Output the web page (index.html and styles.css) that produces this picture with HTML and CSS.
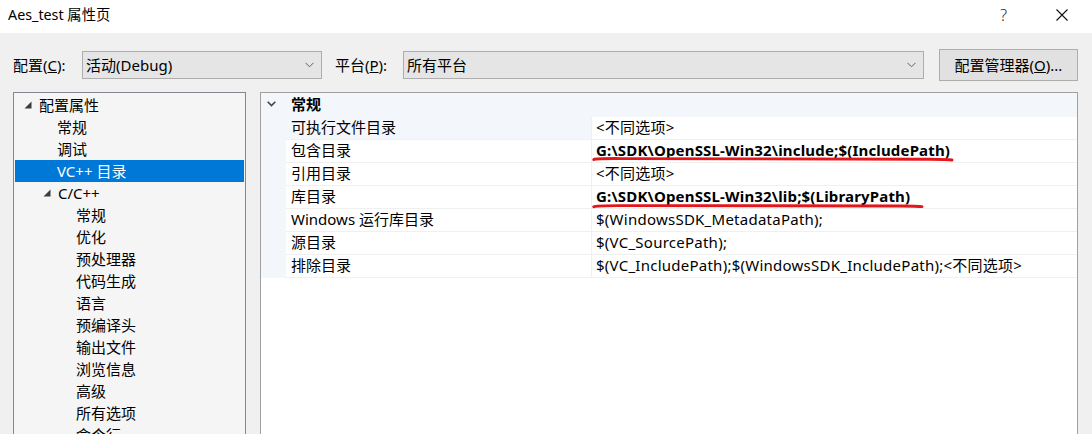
FILE: index.html
```html
<!DOCTYPE html>
<html lang="zh-CN">
<head>
<meta charset="utf-8">
<title>Aes_test 属性页</title>
<link rel="stylesheet" href="styles.css">
</head>
<body>
<div class="window">
  <header class="titlebar">
    <span class="title">Aes_test 属性页</span>
    <div class="title-btns">
      <span class="help">?</span>
      <svg class="close" width="12" height="12" viewBox="0 0 12 12"><path d="M0.5 0.5 L11.5 11.5 M11.5 0.5 L0.5 11.5" stroke="#111" stroke-width="1.1" fill="none"/></svg>
    </div>
  </header>
  <div class="body">
    <div class="toolbar">
      <label class="lbl lbl-config">配置(<u>C</u>):</label>
      <div class="combo combo-config"><span>活动(Debug)</span><svg class="chev" width="9" height="6" viewBox="0 0 9 6"><path d="M0.5 0.8 L4.5 4.8 L8.5 0.8" stroke="#606060" stroke-width="1" fill="none"/></svg></div>
      <label class="lbl lbl-platform">平台(<u>P</u>):</label>
      <div class="combo combo-platform"><span>所有平台</span><svg class="chev" width="9" height="6" viewBox="0 0 9 6"><path d="M0.5 0.8 L4.5 4.8 L8.5 0.8" stroke="#606060" stroke-width="1" fill="none"/></svg></div>
      <button class="btn">配置管理器(<u>O</u>)...</button>
    </div>
    <div class="panels">
      <div class="tree">
        <div class="node lvl0"><svg class="tri" width="8" height="8" viewBox="0 0 8 8"><polygon points="7.5,0.5 7.5,7.5 0.5,7.5" fill="#3c3c3c"/></svg>配置属性</div>
        <div class="node lvl1">常规</div>
        <div class="node lvl1">调试</div>
        <div class="node lvl1 selected">VC++ 目录</div>
        <div class="node lvl1b"><svg class="tri" width="8" height="8" viewBox="0 0 8 8"><polygon points="7.5,0.5 7.5,7.5 0.5,7.5" fill="#3c3c3c"/></svg>C/C++</div>
        <div class="node lvl2">常规</div>
        <div class="node lvl2">优化</div>
        <div class="node lvl2">预处理器</div>
        <div class="node lvl2">代码生成</div>
        <div class="node lvl2">语言</div>
        <div class="node lvl2">预编译头</div>
        <div class="node lvl2">输出文件</div>
        <div class="node lvl2">浏览信息</div>
        <div class="node lvl2">高级</div>
        <div class="node lvl2">所有选项</div>
        <div class="node lvl2">命令行</div>
      </div>
      <div class="grid">
        <div class="cat">
          <svg class="cat-chev" width="9" height="6" viewBox="0 0 9 6"><path d="M0.7 0.7 L4.5 4.5 L8.3 0.7" stroke="#444" stroke-width="1.6" fill="none"/></svg>
          <span class="cat-name">常规</span>
        </div>
        <div class="row">
          <div class="margin"></div>
          <div class="name tinted">可执行文件目录</div>
          <div class="value">&lt;不同选项&gt;</div>
        </div>
        <div class="row">
          <div class="margin"></div>
          <div class="name">包含目录</div>
          <div class="value bold">G:\SDK\OpenSSL-Win32\include;$(IncludePath)<svg class="mark mark1" width="362" height="6" viewBox="0 0 362 6"><path d="M1.8 3.5 Q4 2.4 30 2.6 L338 3.2 Q356 3.4 360 4" stroke="#e3161b" stroke-width="2.9" fill="none" stroke-linecap="round"/></svg></div>
        </div>
        <div class="row">
          <div class="margin"></div>
          <div class="name">引用目录</div>
          <div class="value">&lt;不同选项&gt;</div>
        </div>
        <div class="row">
          <div class="margin"></div>
          <div class="name">库目录</div>
          <div class="value bold">G:\SDK\OpenSSL-Win32\lib;$(LibraryPath)<svg class="mark mark2" width="332" height="6" viewBox="0 0 332 6"><path d="M1.8 3.8 Q4 2.5 30 2.6 L308 3 Q326 3.2 330 3.6" stroke="#e3161b" stroke-width="2.9" fill="none" stroke-linecap="round"/></svg></div>
        </div>
        <div class="row">
          <div class="margin"></div>
          <div class="name">Windows 运行库目录</div>
          <div class="value">$(WindowsSDK_MetadataPath);</div>
        </div>
        <div class="row">
          <div class="margin"></div>
          <div class="name">源目录</div>
          <div class="value">$(VC_SourcePath);</div>
        </div>
        <div class="row">
          <div class="margin"></div>
          <div class="name">排除目录</div>
          <div class="value">$(VC_IncludePath);$(WindowsSDK_IncludePath);&lt;不同选项&gt;</div>
        </div>
      </div>
    </div>
  </div>
</div>
</body>
</html>
```

FILE: styles.css
```css
* { box-sizing: border-box; }
html, body { margin: 0; padding: 0; }
body {
  width: 1092px;
  height: 434px;
  overflow: hidden;
  font-family: "Noto Sans", "Noto Sans CJK SC", sans-serif;
  font-size: 15px;
  color: #000;
  background: #f0f0f0;
}
.window { width: 1092px; height: 434px; display: flex; flex-direction: column; overflow: hidden; }

.titlebar {
  height: 33px;
  flex: none;
  background: #fff;
  display: flex;
  align-items: center;
  justify-content: space-between;
  padding: 0 24px 0 8px;
}
.title { font-size: 14.3px; line-height: 20px; margin-top: -4px; }
.title-btns { display: flex; align-items: center; gap: 49px; }
.help { font-size: 16px; font-weight: 300; color: #222; line-height: 16px; margin-top: -4px; }
.close { display: block; margin-top: -4px; }

.body { flex: 1; display: flex; flex-direction: column; overflow: hidden; }

.toolbar {
  display: flex;
  align-items: center;
  height: 32px;
  margin-top: 16px;
  padding-left: 13px;
  flex: none;
}
.lbl { line-height: 20px; white-space: nowrap; padding-bottom: 1px; }
.lbl-config { width: 69px; }
.lbl-platform { width: 68px; margin-left: 13px; }
.combo {
  height: 28px;
  background: #e5e5e5;
  border: 1px solid #adadad;
  display: flex;
  align-items: center;
  justify-content: space-between;
  padding: 0 7px 1px 3px;
}
.combo span { line-height: 20px; }
.combo-config { width: 240px; }
.combo-platform { width: 521px; }
.chev { display: block; margin-top: 1px; }
.btn {
  margin-left: 15px;
  width: 139px;
  height: 32px;
  background: #e1e1e1;
  border: 1px solid #adadad;
  font: inherit;
  color: #000;
  padding: 0 0 1px 0;
  display: flex;
  align-items: center;
  justify-content: center;
}

.panels {
  display: flex;
  gap: 14px;
  padding-left: 13px;
  margin-top: 11px;
  height: 360px;
  flex: none;
}
.tree {
  width: 233px;
  background: #f5f5f5;
  border: 1px solid #828790;
  padding: 1px;
}
.node {
  height: 22px;
  line-height: 20px;
  padding-bottom: 1px;
  display: flex;
  align-items: center;
  white-space: nowrap;
}
.lvl0 { padding-left: 9px; }
.lvl1 { padding-left: 42px; }
.lvl1b { padding-left: 28px; }
.lvl2 { padding-left: 61px; }
.tri { display: block; margin-right: 7px; margin-top: 0; }
.node.selected { background: #0078d7; color: #fff; }

.grid {
  width: 818px;
  background: #fff;
  border: 1px solid #a0a0a0;
}
.cat {
  height: 24px;
  background: #f3f6fb;
  display: flex;
  align-items: center;
}
.cat-chev { display: block; margin-left: 6px; margin-top: -2px; }
.cat-name { font-weight: 700; margin-left: 15px; line-height: 20px; margin-top: -3px; }
.row {
  display: grid;
  grid-template-columns: 25px 305px 1fr;
  height: 23px;
}
.margin { background: #f3f6fb; }
.name {
  padding-left: 5px;
  line-height: 21px;
  border-bottom: 1px solid #f0f0f0;
  white-space: nowrap;
}
.name.tinted { background: #f3f6fb; }
.value {
  position: relative;
  border-left: 1px solid #f0f0f0;
  border-bottom: 1px solid #f0f0f0;
  padding-left: 4px;
  line-height: 21px;
  white-space: nowrap;
  letter-spacing: 0.25px;
}
.value.bold { font-weight: 700; letter-spacing: 0.17px; }
.mark { position: absolute; left: 0; display: block; }
.mark1 { bottom: 0; }
.mark2 { bottom: -1px; }
```
